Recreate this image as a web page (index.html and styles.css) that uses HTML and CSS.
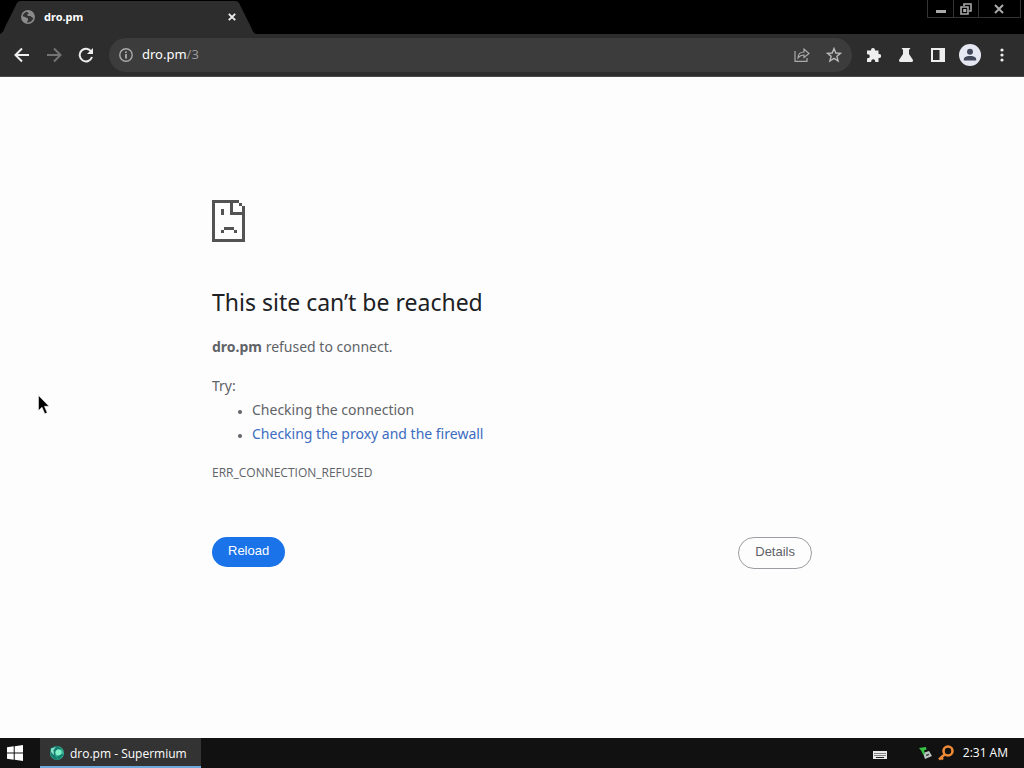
FILE: index.html
```html
<!DOCTYPE html>
<html lang="en">
<head>
<meta charset="utf-8">
<meta name="viewport" content="width=device-width, initial-scale=1">
<title>dro.pm</title>
<link rel="stylesheet" href="styles.css">
</head>
<body>
<header class="browser">
  <div class="tabstrip">
    <div class="tab">
      <svg class="tab-shape" viewBox="0 0 256 34" preserveAspectRatio="none" aria-hidden="true"><path d="M0 34C4 32 4 29 6 25L17 3Q18 1 21 1H235Q238 1 239 3L250 25C252 29 253 33 256 34Z" fill="#2d2d2d"/></svg>
      <svg class="tab-icon" viewBox="0 0 14 14" aria-hidden="true"><circle cx="7" cy="7" r="6.2" fill="#333" stroke="#8b8b8b" stroke-width="1.5"/><path d="M1 6L4 7 7 8.500V10L5.500 13C2 12 .5 9 1 6ZM5 1L9 1C12 2 13.500 5 13 8L11 7.500 9.500 6H7L6 4.500 8 3.500Z" fill="#8b8b8b"/></svg>
      <span class="tab-title">dro.pm</span>
      <button class="tab-close" aria-label="Close tab"><svg width="8" height="8" viewBox="0 0 8 8"><path d="M.8.8 7.200 7.200M7.200.8.8 7.200" stroke="#eee" stroke-width="1.9"/></svg></button>
    </div>
    <div class="window-controls">
      <button class="win" aria-label="Minimize"><svg width="12" height="12" viewBox="0 0 12 12"><path d="M1 7H11V10H1Z" fill="#aaa"/></svg></button>
      <button class="win" aria-label="Restore"><svg width="12" height="12" viewBox="0 0 12 12" fill="none" stroke="#aaa" stroke-width="1.600"><path d="M4 3V1H11V8H9"/><path d="M1 4H8V11H1ZM4 6.800H5.500V8.300H4Z"/></svg></button>
      <button class="win win-close" aria-label="Close"><svg width="10" height="10" viewBox="0 0 10 10"><path d="M1 1 9 9M9 1 1 9" stroke="#aaa" stroke-width="2"/></svg></button>
    </div>
  </div>
  <div class="toolbar">
    <button class="tool" aria-label="Back"><svg width="16" height="16" viewBox="0 0 16 16"><path d="M15 8H2M8 1.500 1.500 8 8 14.500" fill="none" stroke="#eee" stroke-width="2"/></svg></button>
    <button class="tool" aria-label="Forward"><svg width="16" height="16" viewBox="0 0 16 16"><path d="M1 8H14M8 1.500 14.500 8 8 14.500" fill="none" stroke="#747474" stroke-width="2"/></svg></button>
    <button class="tool" aria-label="Reload page"><svg width="16" height="16" viewBox="0 0 16 16"><path d="M13.200 4.500A6.300 6.300 0 1 0 14 10" fill="none" stroke="#eee" stroke-width="2"/><path d="M15 1V7H9Z" fill="#eee"/></svg></button>
    <div class="omnibox">
      <button class="site-info" aria-label="Site information"><svg width="14" height="14" viewBox="0 0 14 14"><circle cx="7" cy="7" r="6.200" fill="none" stroke="#aaa" stroke-width="1.400"/><path d="M6.200 6H7.800V10.500H6.200ZM6.200 3.400H7.800V5H6.200Z" fill="#bbb"/></svg></button>
      <a class="url" href="#"><span class="host">dro.pm</span>/3</a>
      <button class="tool" aria-label="Share"><svg width="16" height="16" viewBox="0 0 16 16" fill="none" stroke="#aaa" stroke-width="1.200"><path d="M1 4V14.400H13V11"/><path d="M4 11C4 7 6.500 5 10 5V2L15 6.500 10 10.500V8C7.500 8 5.500 9 4 11Z"/></svg></button>
      <button class="tool" aria-label="Bookmark"><svg width="16" height="16" viewBox="0 0 16 16"><path d="M8 1.600 9.800 6 14.500 6.300 10.900 9.300 12.100 14 8 11.400 3.900 14 5.100 9.300 1.500 6.300 6.200 6Z" fill="none" stroke="#bbb" stroke-width="1.400"/></svg></button>
    </div>
    <button class="tool" aria-label="Extensions"><svg width="16" height="16" viewBox="0 0 16 16"><path d="M1 3.500H5V3A2 2 0 0 1 9 3V3.500H12.500V7H13.200A2 2 0 0 1 13.200 11H12.500V15H9.200V14.200A2 2 0 0 0 5.200 14.200V15H1V11.200H1.800A2 2 0 0 0 1.800 7.200H1Z" fill="#eee"/></svg></button>
    <button class="tool" aria-label="Experiments"><svg width="16" height="16" viewBox="0 0 16 16"><path d="M3.500 1H12.500L11 3V7L15 13Q15.500 15 13.500 15H2.500Q.5 15 1 13L5 7V3Z" fill="#eee"/></svg></button>
    <button class="tool" aria-label="Side panel"><svg width="16" height="16" viewBox="0 0 16 16"><path d="M1 1H15V15H1ZM3 3V13H9.500V3Z" fill="#eee" fill-rule="evenodd"/></svg></button>
    <button class="tool" aria-label="Profile"><svg class="avatar" width="22" height="22" viewBox="0 0 22 22"><circle cx="11" cy="11" r="11" fill="#e5e8f2"/><circle cx="11" cy="7.700" r="3" fill="#42485a"/><path d="M4.800 16.500V15C5 12.500 9 12 11 12S17 12.500 17.200 15V16.500Z" fill="#42485a"/></svg></button>
    <button class="tool" aria-label="Menu"><svg width="16" height="16" viewBox="0 0 16 16" fill="#eee"><circle cx="8" cy="3" r="1.600"/><circle cx="8" cy="8" r="1.600"/><circle cx="8" cy="13" r="1.600"/></svg></button>
  </div>
</header>
<main class="page">
  <div class="error">
    <svg class="sad" width="33" height="42" viewBox="0 0 33 42" shape-rendering="crispEdges" fill="#535353" aria-hidden="true"><path d="M0 0H27V3H21V12H33V42H0ZM3 3V39H30V15H18V3Z" fill-rule="evenodd"/><path d="M27 3H30V6H27ZM30 6H33V12H30ZM9 9H12V15H9ZM12 27H22V30H12ZM9 30H12V33H9ZM22 30H25V33H22Z"/></svg>
    <h1 class="title">This site can’t be reached</h1>
    <p class="summary"><strong>dro.pm</strong> refused to connect.</p>
    <p class="try">Try:</p>
    <ul class="hints">
      <li>Checking the connection</li>
      <li><a href="#">Checking the proxy and the firewall</a></li>
    </ul>
    <p class="code">ERR_CONNECTION_REFUSED</p>
    <div class="actions">
      <button class="btn btn-primary">Reload</button>
      <button class="btn btn-plain">Details</button>
    </div>
  </div>
</main>
<footer class="taskbar">
  <button class="start" aria-label="Start"><svg width="16" height="16" viewBox="0 0 16 16"><path d="M0 2.300 6.700 1.300V7.500H0ZM7.700 1.200 16 0V7.500H7.700ZM0 8.500H6.700V14.700L0 13.700ZM7.700 8.500H16V16L7.700 14.800Z" fill="#fff"/></svg></button>
  <button class="task"><svg width="16" height="16" viewBox="0 0 16 16" aria-hidden="true"><circle cx="8" cy="8" r="7" fill="#35b293"/><path d="M1.500 3 8 .8 14 4.500 9 4 6 7 6.500 11 9 15C4 15 0 10 1.500 3Z" fill="#187c70"/><path d="M2 3.500 7 2 4.500 5 5 10 2 7Z" fill="#8be0c8"/><circle cx="9.500" cy="7.500" r="3" fill="#7ff0c8"/><path d="M7 12 13 9 14.500 10 10 14.500Z" fill="#138070"/></svg><span>dro.pm - Supermium</span></button>
  <div class="tray">
    <svg class="keyboard" width="14" height="8" viewBox="0 0 14 8" aria-hidden="true"><path d="M0 0H14V8H0Z" fill="#e8e8e8"/><path d="M1.500 2.500H12.500M1.500 4.500H12.500" stroke="#222" stroke-dasharray="1 1"/><path d="M3 6.500H11" stroke="#222"/></svg>
    <svg width="14" height="14" viewBox="0 0 14 14" aria-hidden="true"><path d="M4 7 10 5 13 10 6 13Z" fill="#bcc6c3"/><path d="M7 9.500 10 8.300" stroke="#444" stroke-width="1.500"/><path d="M0 2 7 1 7.500 3.500 5 4.500 6 8 4 8.500 2.500 5Z" fill="#36c442"/></svg>
    <svg width="18" height="18" viewBox="0 0 18 18" aria-hidden="true"><circle cx="11" cy="7" r="4.500" fill="none" stroke="#f08a35" stroke-width="2.600"/><path d="M7.500 10.500 2 15.500M3.500 13 6 15.500" stroke="#f08a35" stroke-width="2.400"/></svg>
    <time class="clock">2:31 AM</time>
  </div>
</footer>
<svg class="cursor" width="12" height="20" viewBox="0 0 12 20" aria-hidden="true"><path d="M.5.5V15.500L4 12.200 6.800 18.800 9.200 17.800 6.400 11.300H11Z" fill="#000" stroke="#fff" stroke-width=".5"/></svg>
</body>
</html>
```
FILE: styles.css
```css
* { box-sizing: border-box; }

body {
  margin: 0;
  min-height: 100vh;
  display: flex;
  flex-direction: column;
  background: #fdfdfd;
  color: #5f6368;
  font-family: "Noto Sans", "Open Sans", sans-serif;
}

button {
  border: 0;
  padding: 0;
  background: none;
  color: inherit;
  font: inherit;
}

svg { display: block; flex: none; }

.tabstrip {
  display: flex;
  justify-content: space-between;
  align-items: flex-start;
  height: 34px;
  background: #000;
}

.tab {
  position: relative;
  display: flex;
  align-items: center;
  width: 256px;
  height: 34px;
  padding: 0 20px 0 21px;
}

.tab-shape {
  position: absolute;
  inset: 0;
  width: 100%;
  height: 100%;
}

.tab-icon { position: relative; width: 14px; height: 14px; }

.tab-title {
  position: relative;
  flex: 1;
  margin-left: 9px;
  padding-bottom: 2px;
  color: #fff;
  font-size: 11px;
  font-weight: 700;
}

.tab-close {
  position: relative;
  display: grid;
  place-items: center;
  width: 8px;
  height: 16px;
}

.window-controls {
  display: flex;
  margin-right: 3px;
  border: 1px solid #333;
  border-top: 0;
}

.win {
  display: grid;
  place-items: center;
  width: 25px;
  height: 17px;
}

.win + .win { border-left: 1px solid #333; }
.win + .win-close { width: 42px; padding-right: 2px; }

.toolbar {
  display: flex;
  align-items: center;
  gap: 16px;
  height: 43px;
  padding: 0 14px;
  background: #2d2d2d;
  border-bottom: 1px solid #484848;
}

.tool {
  display: grid;
  place-items: center;
  width: 16px;
  height: 24px;
}

.avatar { margin: 0 -3px; }

.omnibox {
  flex: 1;
  display: flex;
  align-items: center;
  gap: 16px;
  height: 34px;
  margin: 0 -2px 0 -1px;
  padding: 0 10px;
  border-radius: 17px;
  background: #3c3c3c;
}

.url {
  flex: 1;
  margin-left: -7px;
  padding-bottom: 2px;
  color: #999;
  font-size: 13px;
  text-decoration: none;
}

.host { color: #fff; }

.page { flex: 1; padding: 123px 24px 0; }

.error {
  max-width: 600px;
  margin: 0 auto;
  font-size: 14px;
  line-height: 24px;
}

.error p { margin: 0; }

.error .title {
  margin: 45px 0 18px;
  color: #202124;
  font-size: 23px;
  font-weight: 400;
  line-height: 30px;
}

.error .try { margin-top: 15px; }
.hints { margin: 0; padding-left: 40px; }
.hints li::marker { font-size: 10px; }
.hints a { color: #3c6cc0; text-decoration: none; }
.error .code { margin-top: 15px; font-family: "Open Sans", "Noto Sans", sans-serif; font-size: 12px; }

.actions {
  display: flex;
  justify-content: space-between;
  align-items: flex-start;
  margin-top: 52px;
}

.btn {
  height: 32px;
  padding: 0 16px;
  border-radius: 16px;
  font-family: "Liberation Sans", Arial, sans-serif;
  font-size: 13px;
}

.btn-primary { height: 30px; padding-bottom: 2px; background: #1a73e8; color: #fff; }
.btn-plain { padding-bottom: 2px; border: 1px solid #9a9da1; }

.taskbar {
  display: flex;
  justify-content: space-between;
  height: 30px;
  background: #111;
  color: #fff;
  font-family: "Open Sans", "Noto Sans", sans-serif;
  font-size: 12px;
}

.start {
  display: grid;
  place-items: center;
  width: 30px;
  margin-right: 10px;
}

.task {
  display: flex;
  align-items: center;
  gap: 5px;
  padding: 2px 14px 0 9px;
  background: #333;
  border-bottom: 2px solid #6fa9dc;
}

.tray {
  flex: 1;
  display: flex;
  justify-content: flex-end;
  align-items: center;
  gap: 4px;
  padding-right: 16px;
}

.keyboard { margin: 4px 28px 0 0; }
.clock { margin-left: 4px; padding-bottom: 2px; }

.cursor { position: absolute; left: 38px; top: 395px; }
```
